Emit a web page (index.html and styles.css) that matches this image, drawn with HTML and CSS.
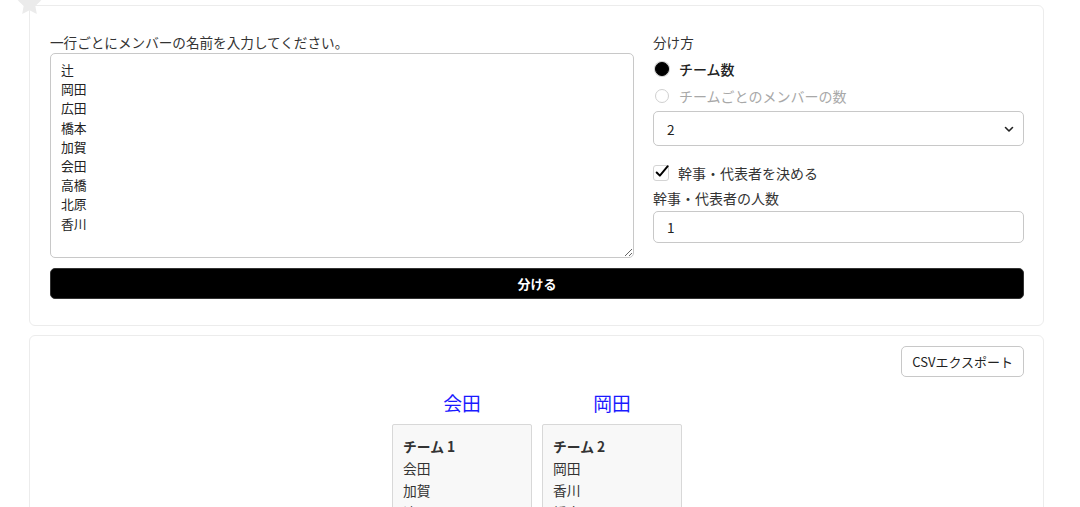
FILE: index.html
```html
<!DOCTYPE html>
<html lang="ja">
<head>
<meta charset="utf-8">
<title>チーム分け</title>
<link rel="stylesheet" href="styles.css">
</head>
<body>
<div class="page">
  <section class="card form-card">
    <svg class="star" viewBox="0 0 24 24" aria-hidden="true"><path d="M12 1.5l3.2 6.6 7.3 1-5.3 5.1 1.3 7.2L12 18l-6.5 3.4 1.3-7.2L1.5 9.1l7.3-1z"/></svg>
    <div class="form-grid">
      <div class="col-left">
        <label class="field-label">一行ごとにメンバーの名前を入力してください。</label>
        <textarea class="names">辻
岡田
広田
橋本
加賀
会田
高橋
北原
香川</textarea>
      </div>
      <div class="col-right">
        <div class="field-label">分け方</div>
        <label class="radio-row"><span class="radio checked"></span><span>チーム数</span></label>
        <label class="radio-row disabled"><span class="radio"></span><span>チームごとのメンバーの数</span></label>
        <div class="select">
          <span>2</span>
          <svg class="chev" viewBox="0 0 12 12" aria-hidden="true"><path d="M2.5 4.5L6 8l3.5-3.5" fill="none" stroke="#222" stroke-width="1.6" stroke-linecap="round" stroke-linejoin="round"/></svg>
        </div>
        <label class="check-row">
          <span class="checkbox"><svg viewBox="0 0 18 18" aria-hidden="true"><path d="M3 9.5l3.6 3.6L15.5 2.5" fill="none" stroke="#000" stroke-width="2.2" stroke-linecap="round" stroke-linejoin="round"/></svg></span>
          <span>幹事・代表者を決める</span>
        </label>
        <div class="field-label2">幹事・代表者の人数</div>
        <div class="input">1</div>
      </div>
    </div>
    <button class="submit">分ける</button>
  </section>

  <section class="card result-card">
    <div class="result-top">
      <button class="csv">CSVエクスポート</button>
    </div>
    <div class="teams">
      <div class="team">
        <div class="leader">会田</div>
        <div class="team-box">
          <div class="team-name">チーム 1</div>
          <div>会田</div>
          <div>加賀</div>
          <div>辻</div>
          <div>北原</div>
          <div>広田</div>
        </div>
      </div>
      <div class="team">
        <div class="leader">岡田</div>
        <div class="team-box">
          <div class="team-name">チーム 2</div>
          <div>岡田</div>
          <div>香川</div>
          <div>橋本</div>
          <div>高橋</div>
        </div>
      </div>
    </div>
  </section>
</div>
</body>
</html>
```

FILE: styles.css
```css
* { box-sizing: border-box; }
html, body { margin: 0; padding: 0; background: #fff; }
body {
  font-family: "Noto Sans CJK JP", "Noto Sans", sans-serif;
  color: #333;
  overflow: hidden;
}
.page {
  width: 1015px;
  margin-left: 29px;
  padding-top: 5px;
}
.card {
  position: relative;
  border: 1px solid #ececec;
  border-radius: 6px;
  background: #fff;
}
.form-card {
  padding: 26px 19px 26px 20px;
}
.star {
  position: absolute;
  left: -14px;
  top: -16px;
  width: 27px;
  height: 27px;
  fill: #ebebeb;
}
.form-grid {
  display: grid;
  grid-template-columns: 584px 1fr;
  column-gap: 19px;
}
.col-left { display: flex; flex-direction: column; }
.field-label {
  font-size: 13.6px;
  line-height: 21px;
  color: #333;
}
.names {
  display: block;
  width: 584px;
  height: 205px;
  margin: 0;
  padding: 6px 10px;
  font-family: "Noto Sans CJK JP", sans-serif;
  font-size: 12.8px;
  line-height: 19.2px;
  color: #222;
  border: 1px solid #c8c8c8;
  border-radius: 5px;
  resize: vertical;
  overflow: hidden;
}
.col-right { display: flex; flex-direction: column; }
.radio-row {
  display: flex;
  align-items: center;
  gap: 10px;
  height: 27px;
  font-size: 14px;
  font-weight: 500;
  color: #222;
  padding-left: 2px;
}
.radio-row:first-of-type { margin-top: 2px; }
.radio-row.disabled { color: #a8a8a8; font-weight: 400; }
.radio {
  width: 14px;
  height: 14px;
  border-radius: 50%;
  border: 1px solid #d0d0d0;
  background: #fff;
  flex: none;
}
.radio.checked {
  background: #000;
  border-color: #000;
  box-shadow: 0 0 0 1px #cfcfcf;
}
.select {
  margin-top: 2px;
  height: 35px;
  border: 1px solid #c8c8c8;
  border-radius: 5px;
  display: flex;
  align-items: center;
  justify-content: space-between;
  padding: 0 8px 0 13px;
  font-size: 13.6px;
  color: #222;
}
.chev { width: 12px; height: 12px; }
.check-row {
  margin-top: 14px;
  display: flex;
  align-items: center;
  gap: 9px;
  height: 26px;
  font-size: 14px;
  color: #333;
}
.checkbox {
  position: relative;
  width: 16px;
  height: 16px;
  border: 1px solid #d4d4d4;
  border-radius: 3px;
  flex: none;
}
.checkbox svg {
  position: absolute;
  left: 0;
  top: -2px;
  width: 16px;
  height: 16px;
}
.field-label2 {
  font-size: 14px;
  line-height: 22px;
  color: #333;
  margin-top: 1px;
}
.input {
  margin-top: 2px;
  height: 32px;
  border: 1px solid #c8c8c8;
  border-radius: 5px;
  display: flex;
  align-items: center;
  padding: 0 13px;
  font-size: 13.6px;
  color: #222;
}
.submit {
  display: block;
  width: 100%;
  margin-top: 10px;
  height: 31px;
  background: #000;
  color: #fff;
  border: 1px solid #333;
  border-radius: 5px;
  font-family: "Noto Sans CJK JP", sans-serif;
  font-size: 13px;
  font-weight: 700;
  cursor: pointer;
}
.result-card {
  margin-top: 9px;
  padding: 10px 19px 20px 20px;
}
.result-top {
  display: flex;
  justify-content: flex-end;
}
.csv {
  height: 31px;
  padding: 0 10px;
  background: #fff;
  border: 1px solid #c8c8c8;
  border-radius: 5px;
  font-family: "Noto Sans CJK JP", sans-serif;
  font-size: 13px;
  color: #222;
}
.teams {
  display: flex;
  justify-content: center;
  gap: 10px;
  margin-top: 12px;
}
.team {
  width: 140px;
  display: flex;
  flex-direction: column;
  align-items: center;
}
.leader {
  font-size: 18.8px;
  line-height: 27px;
  color: #1a1aff;
}
.team-box {
  width: 140px;
  margin-top: 8px;
  padding: 10px 10px;
  background: #f8f8f8;
  border: 1px solid #d8d8d8;
  border-radius: 2px;
  font-size: 13.8px;
  line-height: 22px;
  color: #333;
}
.team-name { font-weight: 700; }
```
